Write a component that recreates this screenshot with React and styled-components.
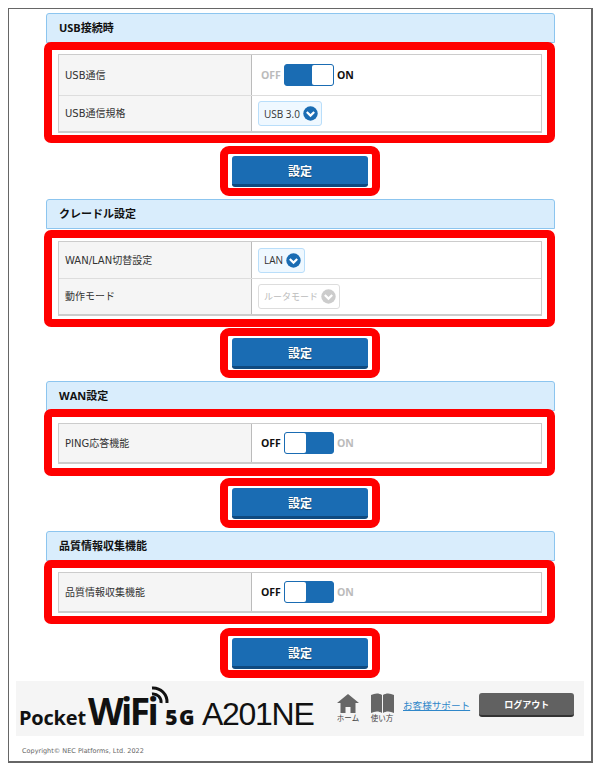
import React from "react";
import styled, { createGlobalStyle } from "styled-components";

const Global = createGlobalStyle`
  html, body { margin: 0; padding: 0; background: #fff; }
  body { font-family: "DejaVu Sans", "Noto Sans CJK JP", sans-serif; color: #333; }
`;

const Frame = styled.div`
  box-sizing: border-box;
  width: 585px;
  height: 755px;
  margin: 8px 0 0 8px;
  border: 1px solid #666;
  border-bottom-width: 2px;
  border-right-width: 2px;
  padding-top: 4px;
  display: flex;
  flex-direction: column;
`;

const Section = styled.section`
  margin: 0 36px 0 37px;
  height: ${(p) => p.$h}px;
  display: flex;
  flex-direction: column;
  align-items: center;
`;

const Heading = styled.h2`
  box-sizing: border-box;
  align-self: stretch;
  height: 30px;
  margin: 0;
  padding: 0 0 2px 12px;
  flex: none;
  display: flex;
  align-items: center;
  background: #d9edfc;
  border: 1px solid #8cc5ef;
  border-radius: 3px 3px 0 0;
  font-family: "Open Sans", "Noto Sans CJK JP", sans-serif;
  font-size: 11px;
  font-weight: 700;
  color: #111;
`;

const RedBox = styled.div`
  box-sizing: border-box;
  align-self: stretch;
  margin: ${(p) => p.$top}px 0 0 -2px;
  padding: ${(p) => p.$padTop}px 5px ${(p) => p.$padBottom}px 6px;
  background: #fff;
  border: 8px solid #f00;
  border-radius: 7px;
  position: relative;
  flex: none;
`;

const Table = styled.div`
  border: 1px solid #ccc;
  border-bottom-width: 2px;
  display: flex;
  flex-direction: column;
`;

const Row = styled.div`
  height: ${(p) => p.$h}px;
  display: flex;
  align-items: stretch;
  & + & { border-top: 1px solid #ddd; }
`;

const Label = styled.div`
  box-sizing: border-box;
  width: 193px;
  flex: none;
  padding: 0 0 2px 6px;
  display: flex;
  align-items: center;
  background: #f5f5f5;
  border-right: 1px solid #bbb;
  font-size: 10px;
  color: #333;
`;

const Value = styled.div`
  flex: 1;
  padding-left: ${(p) => p.$pad}px;
  display: flex;
  align-items: center;
  gap: 3px;
`;

const SwitchText = styled.span`
  font-family: "Open Sans", sans-serif;
  font-size: 10.5px;
  font-weight: 700;
  color: ${(p) => (p.$on ? "#111" : "#bbb")};
`;

const Track = styled.div`
  box-sizing: border-box;
  width: 50px;
  height: 22px;
  display: flex;
  justify-content: ${(p) => (p.$on ? "flex-end" : "flex-start")};
  background: #1a6cb3;
  border: 1px solid #1a6cb3;
  border-radius: 3px;
`;

const Knob = styled.div`
  width: 21px;
  background: #fff;
  border-radius: 2px;
`;

const Select = styled.div`
  box-sizing: border-box;
  height: 25px;
  padding: 0 3px 0 5px;
  display: inline-flex;
  align-items: center;
  gap: 3px;
  border: 1px solid ${(p) => (p.$disabled ? "#ddd" : "#b9defa")};
  background: ${(p) => (p.$disabled ? "#fff" : "#eff8ff")};
  border-radius: 3px;
  font-family: "Open Sans", "Noto Sans CJK JP", sans-serif;
  font-size: ${(p) => (p.$disabled ? 9 : 10)}px;
  color: ${(p) => (p.$disabled ? "#bbb" : "#333")};
`;

const ButtonBox = styled.div`
  box-sizing: border-box;
  width: 160px;
  height: 50px;
  margin: ${(p) => p.$top}px 0 0 -1px;
  padding: 2px 4px 1px 4px;
  border: 8px solid #f00;
  border-radius: 9px;
  background: #fff;
  flex: none;
`;

const Button = styled.button`
  box-sizing: border-box;
  display: block;
  width: 100%;
  height: 31px;
  padding: 0;
  border: none;
  border-bottom: 3px solid #0f4a80;
  border-radius: 3px;
  background: #1a6cb3;
  color: #fff;
  font-family: "Noto Sans CJK JP", sans-serif;
  font-size: 12px;
  font-weight: 700;
  text-shadow: 0 1px 1px #0006;
`;

const Footer = styled.footer`
  height: 55px;
  margin: 0 7px;
  padding-left: 3px;
  background: #f5f5f5;
  display: flex;
  align-items: center;
  flex: none;
`;

const Logo = styled.div`
  width: 317px;
  flex: none;
  display: flex;
  align-items: baseline;
  font-family: "Open Sans", sans-serif;
  color: #111;
  position: relative;
  padding-top: 6px;
`;

const Pocket = styled.span`
  font-size: 20px;
  font-weight: 700;
  letter-spacing: -0.2px;
`;

const Wifi = styled.span`
  font-size: 37px;
  font-weight: 700;
  margin: 0 9px 0 2px;
  line-height: 1;
  letter-spacing: -2.6px;
`;

const FiveG = styled.span`
  font-size: 21px;
  font-weight: 800;
  letter-spacing: 1.5px;
  margin-right: 6px;
`;

const Model = styled.span`
  font-family: "Liberation Sans", sans-serif;
  font-size: 32px;
  letter-spacing: -1.3px;
  line-height: 1;
`;

const WaveIcon = styled.svg`
  position: absolute;
  left: 131px;
  top: -1px;
`;

const NavItem = styled.div`
  width: 24px;
  margin-right: ${(p) => p.$gap}px;
  display: flex;
  flex-direction: column;
  align-items: center;
  font-family: "Noto Sans CJK JP", sans-serif;
  font-size: 7.5px;
  line-height: 9px;
  color: #444;
  white-space: nowrap;
  flex: none;
  margin-bottom: 3px;
`;

const Support = styled.a`
  font-family: "Noto Sans CJK JP", sans-serif;
  font-size: 9.6px;
  color: #2f87c9;
  text-decoration: underline;
  margin: 0 9px 8px 0;
  white-space: nowrap;
`;

const Logout = styled.div`
  box-sizing: border-box;
  width: 95px;
  height: 24px;
  margin-bottom: 7px;
  flex: none;
  display: flex;
  align-items: center;
  justify-content: center;
  background: #616161;
  border-bottom: 2px solid #333;
  border-radius: 3px;
  color: #fff;
  font-family: "Noto Sans CJK JP", sans-serif;
  font-size: 9px;
  font-weight: 700;
`;

const Copyright = styled.div`
  margin: 11px 0 0 13px;
  font-size: 6.5px;
  color: #666;
`;

const Chevron = ({ disabled }) => (
  <svg width="15" height="15" viewBox="0 0 15 15">
    <circle cx="7.5" cy="7.5" r="7.2" fill={disabled ? "#ccc" : "#1a6cb3"} />
    <path d="M3.8 6l3.7 3.6L11.2 6" fill="none" stroke="#fff" strokeWidth="2.2" />
  </svg>
);

const Toggle = ({ on }) => (
  <>
    <SwitchText $on={!on}>OFF</SwitchText>
    <Track $on={on}>
      <Knob />
    </Track>
    <SwitchText $on={on}>ON</SwitchText>
  </>
);

const sections = [
  {
    title: "USB接続時", h: 186, top: -1, padTop: 4, padBottom: 2, btnTop: 3,
    rows: [
      { label: "USB通信", h: 40, toggle: true },
      { label: "USB通信規格", h: 35, select: "USB 3.0" },
    ],
  },
  {
    title: "クレードル設定", h: 182, top: 1, padTop: 3, padBottom: 3, btnTop: 1,
    rows: [
      { label: "WAN/LAN切替設定", h: 36, select: "LAN" },
      { label: "動作モード", h: 35, select: "ルータモード", disabled: true },
    ],
  },
  {
    title: "WAN設定", h: 150, top: -2, padTop: 6, padBottom: 4, btnTop: 2,
    rows: [{ label: "PING応答機能", h: 38, toggle: false }],
  },
  {
    title: "品質情報収集機能", h: 150, top: -1, padTop: 4, padBottom: 3, btnTop: 4,
    rows: [{ label: "品質情報収集機能", h: 38, toggle: false }],
  },
];

export default function App() {
  return (
    <>
      <Global />
      <Frame>
        {sections.map((s) => (
          <Section key={s.title} $h={s.h}>
            <Heading>{s.title}</Heading>
            <RedBox $top={s.top} $padTop={s.padTop} $padBottom={s.padBottom}>
              <Table>
                {s.rows.map((r) => (
                  <Row key={r.label} $h={r.h}>
                    <Label>{r.label}</Label>
                    {r.select ? (
                      <Value $pad={6}>
                        <Select $disabled={r.disabled}>
                          {r.select}
                          <Chevron disabled={r.disabled} />
                        </Select>
                      </Value>
                    ) : (
                      <Value $pad={9}>
                        <Toggle on={r.toggle} />
                      </Value>
                    )}
                  </Row>
                ))}
              </Table>
            </RedBox>
            <ButtonBox $top={s.btnTop}>
              <Button>設定</Button>
            </ButtonBox>
          </Section>
        ))}
        <Footer>
          <Logo>
            <Pocket>Pocket</Pocket>
            <Wifi>WiFi</Wifi>
            <FiveG>5G</FiveG>
            <Model>A201NE</Model>
            <WaveIcon width="20" height="20" viewBox="0 0 20 20">
              <path d="M2 9a8 8 0 0 1 9 9M2 3a14 14 0 0 1 15 15" fill="none" stroke="#111" strokeWidth="3" />
            </WaveIcon>
          </Logo>
          <NavItem $gap={10}>
            <svg width="22" height="20" viewBox="0 0 22 20">
              <path d="M11 1L0 10h3.5v10h5v-6h5v6h5V10H22z" fill="#666" />
            </svg>
            ホーム
          </NavItem>
          <NavItem $gap={9}>
            <svg width="25" height="20" viewBox="0 0 25 20">
              <path d="M1 2c4-2 8-2 11 0v18c-3-2-7-2-11 0zM13 2c3-2 7-2 11 0v18c-4-2-8-2-11 0z" fill="#666" />
            </svg>
            使い方
          </NavItem>
          <Support>お客様サポート</Support>
          <Logout>ログアウト</Logout>
        </Footer>
        <Copyright>Copyright© NEC Platforms, Ltd. 2022</Copyright>
      </Frame>
    </>
  );
}
